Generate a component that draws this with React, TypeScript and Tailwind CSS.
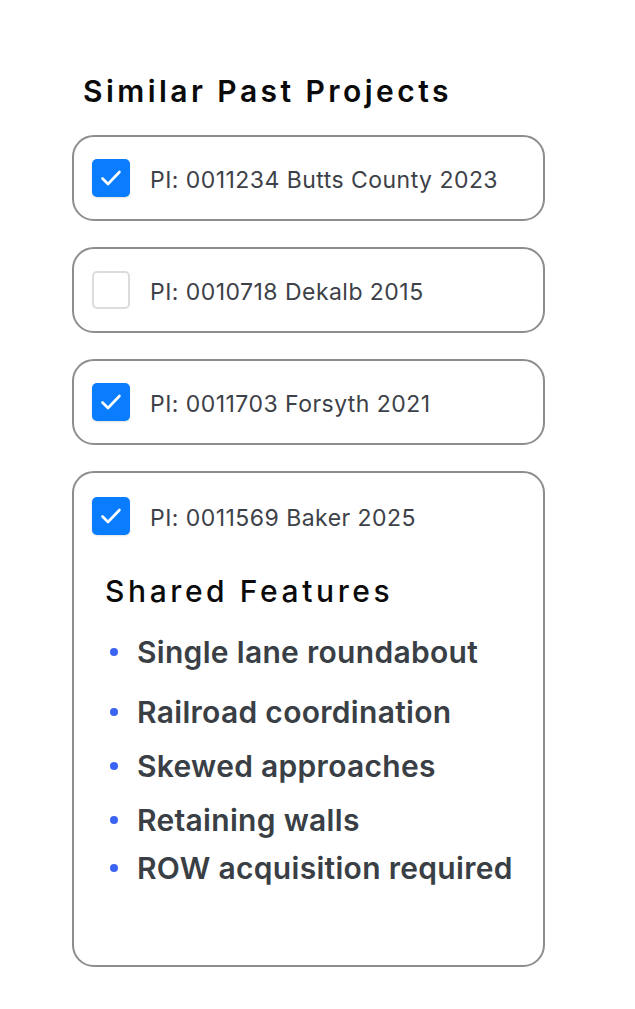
import { useState } from 'react';

type Project = { id: string; label: string; checked: boolean };

const projects: Project[] = [
  { id: 'a', label: 'PI: 0011234 Butts County 2023', checked: true },
  { id: 'b', label: 'PI: 0010718 Dekalb 2015', checked: false },
  { id: 'c', label: 'PI: 0011703 Forsyth 2021', checked: true },
];

const features = [
  { text: 'Single lane roundabout', mt: 'mt-[25px]' },
  { text: 'Railroad coordination', mt: 'mt-[24px]' },
  { text: 'Skewed approaches', mt: 'mt-[18px]' },
  { text: 'Retaining walls', mt: 'mt-[18px]' },
  { text: 'ROW acquisition required', mt: 'mt-[12px]' },
];

const Check = (props: { checked: boolean; onClick: () => void }) => (
  <button
    onClick={props.onClick}
    className={
      props.checked
        ? 'flex h-[38px] w-[38px] shrink-0 items-center justify-center rounded-[5px] bg-[#0a7dff] shadow-[0_1px_2px_rgba(0,0,0,0.12)]'
        : 'flex h-[38px] w-[38px] shrink-0 items-center justify-center rounded-[5px] border-2 border-[#dcdcdc] bg-white'
    }
  >
    {props.checked && (
      <svg width="24" height="24" viewBox="0 0 24 24" fill="none">
        <path d="M3.5 12.5l5.5 5.5L20.5 6" stroke="white" strokeWidth="2.6" strokeLinecap="round" strokeLinejoin="round" />
      </svg>
    )}
  </button>
);

export default function App() {
  const [state, setState] = useState<boolean[]>([true, false, true, true]);
  const toggle = (i: number) => setState(state.map((v, j) => (j === i ? !v : v)));

  return (
    <div className="min-h-screen bg-white pl-[72px] pt-[73px] font-['Inter',sans-serif]">
      <h2 className="ml-[11px] text-[30px] font-semibold leading-[36px] tracking-[0.115em] text-[#0a0a0a]">
        Similar Past Projects
      </h2>

      <div className="mt-[26px] flex w-[473px] flex-col gap-[26px]">
        {projects.map((p, i) => (
          <div
            key={p.id}
            className="flex h-[86px] items-center gap-[20px] rounded-[22px] border-2 border-[#8d8d8f] pl-[18px]"
          >
            <Check checked={state[i]} onClick={() => toggle(i)} />
            <p className="mt-[4px] text-[23px] leading-[28px] tracking-[0.02em] text-[#3d4148]">{p.label}</p>
          </div>
        ))}

        <div className="flex h-[496px] flex-col rounded-[22px] border-2 border-[#8d8d8f] pl-[18px] pt-[24px]">
          <div className="flex items-center gap-[20px]">
            <Check checked={state[3]} onClick={() => toggle(3)} />
            <p className="mt-[4px] text-[23px] leading-[28px] tracking-[0.02em] text-[#3d4148]">PI: 0011569 Baker 2025</p>
          </div>
          <h3 className="ml-[13px] mt-[38px] text-[30px] font-medium leading-[36px] tracking-[0.12em] text-[#0a0a0a]">
            Shared Features
          </h3>
          <ul>
            {features.map((f) => (
              <li key={f.text} className={`${f.mt} flex items-center`}>
                <span className="ml-[18px] h-[8px] w-[8px] rounded-full bg-[#3b63f5]" />
                <span className="ml-[19px] text-[30px] font-semibold leading-[36px] tracking-[0.01em] text-[#3a3f46]">
                  {f.text}
                </span>
              </li>
            ))}
          </ul>
        </div>
      </div>
    </div>
  );
}
